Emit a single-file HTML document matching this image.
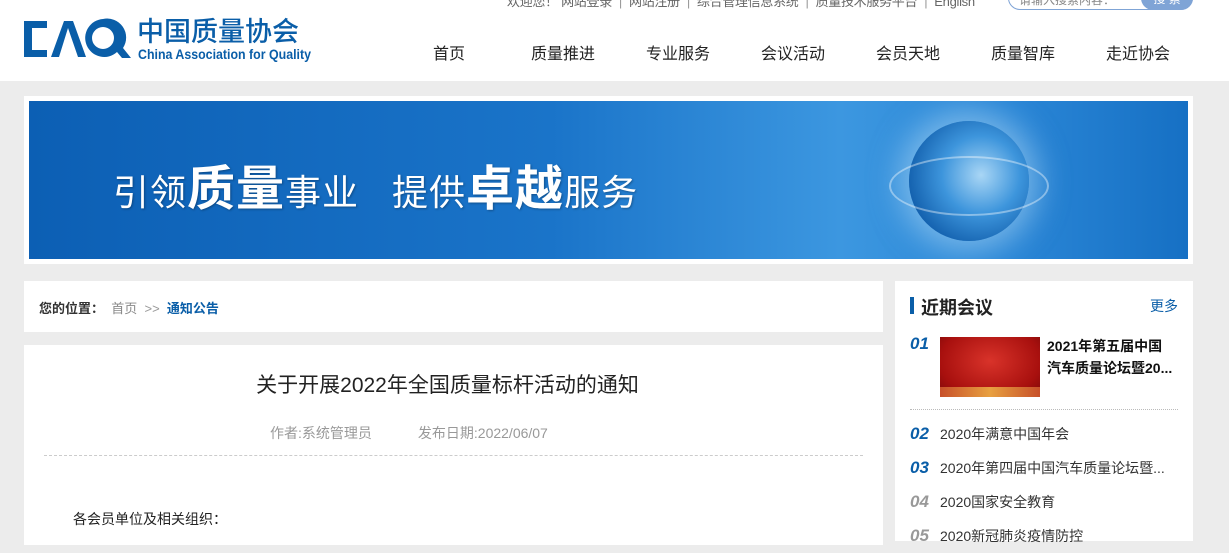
<!DOCTYPE html>
<html><head><meta charset="utf-8"><style>
*{margin:0;padding:0;box-sizing:border-box}
body{width:1229px;height:537px;overflow:hidden;background:#ececec;font-family:"Liberation Sans","Noto Sans CJK SC",sans-serif;position:relative}
.hdr{position:absolute;left:0;top:0;width:1229px;height:81px;background:#fff}
.top{position:absolute;top:-9px;left:507px;font-size:13px;color:#666;white-space:nowrap;letter-spacing:-0.3px}
.top span{margin:0 7px;color:#999}
.search{position:absolute;left:1008px;top:-14px;width:185px;height:24px;border:1px solid #7fa4d6;border-radius:12px;background:#fff;font-size:12px;color:#888;padding:4px 0 0 10px}
.search b{position:absolute;right:-1px;top:-1px;width:52px;height:24px;background:#7fa4d6;border-radius:12px;color:#fff;font-weight:normal;text-align:center;padding-top:4px}
.logo{position:absolute;left:24px;top:14px}
.nav{position:absolute;top:40px;font-size:16px;color:#222}
.box{position:absolute;background:#fff}
.banner{left:24px;top:96px;width:1169px;height:168px}
.blue{position:absolute;left:5px;top:5px;width:1159px;height:158px;background:linear-gradient(90deg,#0c5fb4 0%,#1a74c9 45%,#3c97e0 70%,#2a86d6 85%,#1670c4 100%);overflow:hidden}
.slogan{position:absolute;left:84px;top:48px;color:#fff;font-size:36px;white-space:nowrap;text-shadow:1px 1px 2px rgba(0,0,0,.3);letter-spacing:1px}
.slogan big{font-size:48px;font-weight:bold}
.globe{position:absolute;left:880px;top:20px;width:120px;height:120px;border-radius:50%;background:radial-gradient(circle at 60% 45%,#a9d6f5 0%,#3d95dc 40%,#0e5aa8 80%,#5aa9e6 100%);box-shadow:0 0 30px 10px rgba(190,225,250,.5)}
.num{font-style:italic;font-weight:bold;font-size:17px;display:inline-block;width:30px}
</style></head><body>
<div class="hdr">
<div class="top">欢迎您！ 网站登录<span>|</span>网站注册<span>|</span>综合管理信息系统<span>|</span>质量技术服务平台<span>|</span>English</div>
<div class="search">请输入搜索内容：<b>搜 索</b></div>
<svg class="logo" width="300" height="50" viewBox="0 0 300 50">
<g fill="#0a5ea8">
<path d="M0 7h23v7H8v22h15v7H0z"/>
<path d="M27 43L40 7h9l13 36h-8L44 14 35 43z"/>
<path d="M79 5a19 19 0 1 0 14 33l5 6h9l-8-10a19 19 0 0 0-20-29zm0 8a11 11 0 1 1 0 22a11 11 0 1 1 0-22z"/>
</g>
<text x="113" y="27" font-family="Noto Sans CJK SC" font-size="27" font-weight="500" fill="#0a5ea8">中国质量协会</text>
<text x="114" y="45" font-family="Liberation Sans Narrow,Liberation Sans" font-size="14" font-weight="bold" fill="#0a5ea8" textLength="173" lengthAdjust="spacingAndGlyphs">China Association for Quality</text>
</svg>
<div class="nav" style="left:433px">首页</div>
<div class="nav" style="left:531px">质量推进</div>
<div class="nav" style="left:646px">专业服务</div>
<div class="nav" style="left:761px">会议活动</div>
<div class="nav" style="left:876px">会员天地</div>
<div class="nav" style="left:991px">质量智库</div>
<div class="nav" style="left:1106px">走近协会</div>
</div>
<div class="box banner"><div class="blue">
<div class="globe"></div>
<div style="position:absolute;left:860px;top:55px;width:160px;height:60px;border:2px solid rgba(255,255,255,.4);border-radius:50%"></div>
<div class="slogan">引领<big>质量</big>事业&nbsp;&nbsp;&nbsp;提供<big>卓越</big>服务</div>
</div></div>
<div class="box" style="left:24px;top:281px;width:859px;height:51px">
<div style="position:absolute;left:15px;top:17px;font-size:13px;white-space:nowrap"><b style="color:#333">您的位置：</b>&nbsp;&nbsp;<span style="color:#888">首页</span>&nbsp;&nbsp;<span style="color:#999">&gt;&gt;</span>&nbsp;&nbsp;<b style="color:#0a5ea8">通知公告</b></div>
</div>
<div class="box" style="left:24px;top:345px;width:859px;height:200px">
<div style="position:absolute;left:-6px;width:859px;top:24px;text-align:center;font-size:21px;color:#222">关于开展2022年全国质量标杆活动的通知</div>
<div style="position:absolute;left:246px;top:78px;font-size:14px;color:#999;white-space:nowrap">作者:系统管理员<span style="display:inline-block;width:46px"></span>发布日期:2022/06/07</div>
<div style="position:absolute;left:20px;top:110px;width:819px;border-top:1px dashed #ccc"></div>
<div style="position:absolute;left:49px;top:164px;font-size:14px;color:#222">各会员单位及相关组织：</div>
</div>
<div class="box" style="left:895px;top:281px;width:298px;height:260px">
<div style="position:absolute;left:15px;top:16px;width:4px;height:17px;background:#0a5ea8"></div>
<div style="position:absolute;left:26px;top:13px;font-size:18px;font-weight:bold;color:#222">近期会议</div>
<div style="position:absolute;left:255px;top:15px;font-size:14px;color:#0a5ea8">更多</div>
<div style="position:absolute;left:15px;top:53px;color:#0a5ea8" class="num">01</div>
<div style="position:absolute;left:45px;top:56px;width:100px;height:60px;background:radial-gradient(ellipse at 50% 40%,#d9332a,#a8100e 70%,#7a0808);"><div style="position:absolute;left:0;bottom:0;width:100px;height:10px;background:linear-gradient(90deg,#c7502a,#e8a040,#c7502a)"></div></div>
<div style="position:absolute;left:152px;top:54px;width:140px;font-size:14px;font-weight:bold;color:#111;line-height:22px">2021年第五届中国<br>汽车质量论坛暨20...</div>
<div style="position:absolute;left:15px;top:128px;width:268px;border-top:1px dotted #bbb"></div>
<div style="position:absolute;left:15px;top:136px;font-size:14px;color:#333;white-space:nowrap;line-height:33px">
<div><span class="num" style="color:#0a5ea8">02</span>2020年满意中国年会</div>
<div><span class="num" style="color:#0a5ea8">03</span>2020年第四届中国汽车质量论坛暨...</div>
<div><span class="num" style="color:#999">04</span>2020国家安全教育</div>
<div><span class="num" style="color:#999">05</span>2020新冠肺炎疫情防控</div>
</div>
</div>
</body></html>
